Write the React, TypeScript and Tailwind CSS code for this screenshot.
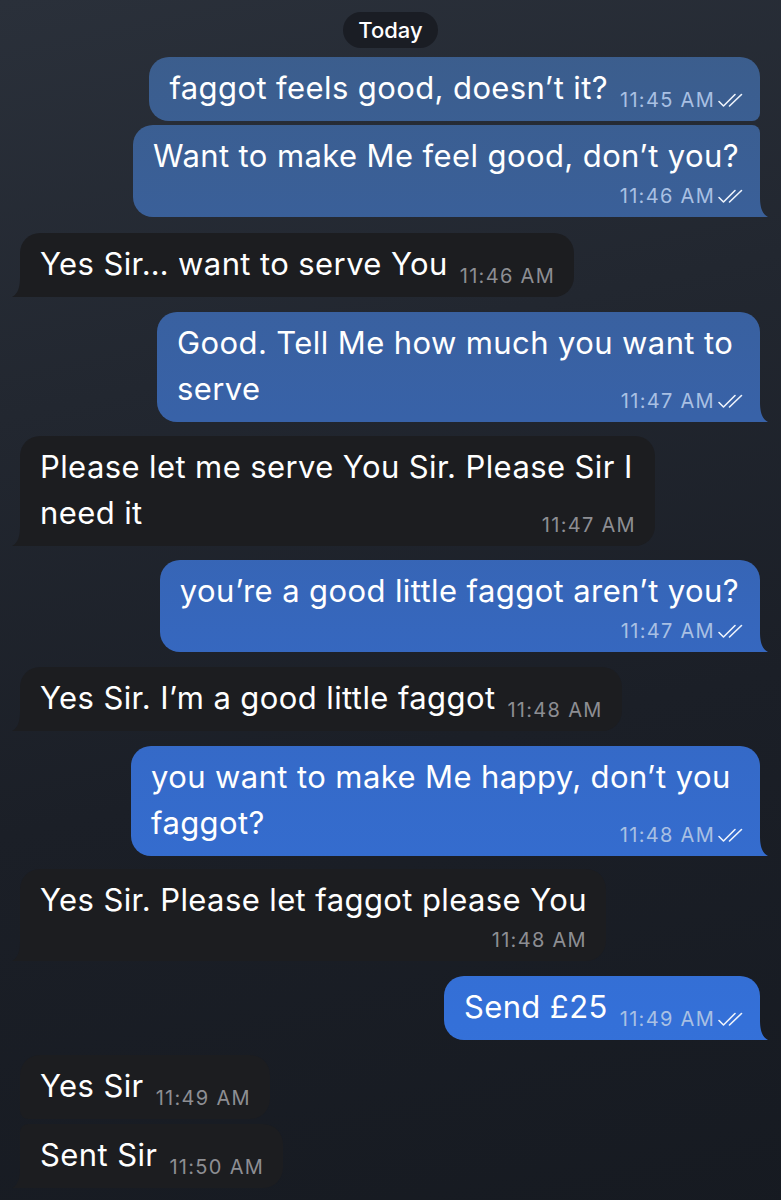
import type { ReactNode } from "react";
import clsx from "clsx";

type Message = {
  out: boolean;
  lines: string[];
  time: string;
  timeBelow?: boolean;
  tail?: boolean;
  joinTop?: boolean;
  joinBottom?: boolean;
  gap: string;
  // wrapped bubbles keep the full layout width, not the tight line width
  width?: string;
};

const messages: Message[] = [
  { out: true, lines: ["faggot feels good, doesn’t it?"], time: "11:45 AM", joinBottom: true, gap: "mt-[9px]" },
  { out: true, lines: ["Want to make Me feel good, don’t you?"], time: "11:46 AM", timeBelow: true, tail: true, joinTop: true, gap: "mt-[4px]" },
  { out: false, lines: ["Yes Sir… want to serve You"], time: "11:46 AM", tail: true, gap: "mt-[16px]" },
  { out: true, lines: ["Good. Tell Me how much you want to", "serve"], time: "11:47 AM", tail: true, gap: "mt-[15px]", width: "w-[603px]" },
  { out: false, lines: ["Please let me serve You Sir. Please Sir I", "need it"], time: "11:47 AM", tail: true, gap: "mt-[14px]", width: "w-[635px]" },
  { out: true, lines: ["you’re a good little faggot aren’t you?"], time: "11:47 AM", timeBelow: true, tail: true, gap: "mt-[14px]" },
  { out: false, lines: ["Yes Sir. I’m a good little faggot"], time: "11:48 AM", tail: true, gap: "mt-[15px]" },
  { out: true, lines: ["you want to make Me happy, don’t you", "faggot?"], time: "11:48 AM", tail: true, gap: "mt-[15px]", width: "w-[629px]" },
  { out: false, lines: ["Yes Sir. Please let faggot please You"], time: "11:48 AM", timeBelow: true, tail: true, gap: "mt-[13px]" },
  { out: true, lines: ["Send £25"], time: "11:49 AM", tail: true, gap: "mt-[15px]" },
  { out: false, lines: ["Yes Sir"], time: "11:49 AM", joinBottom: true, gap: "mt-[15px]" },
  { out: false, lines: ["Sent Sir"], time: "11:50 AM", tail: true, joinTop: true, gap: "mt-[5px]" },
];

const outgoingFill =
  "bg-fixed bg-[linear-gradient(180deg,#3c5d89_0%,#3862a8_35%,#3569c6_60%,#3470d8_85%,#3573dc_100%)]";
const incomingFill = "bg-[#1c1d20]";

function ReadChecks() {
  return (
    <svg width="28" height="15" viewBox="0 0 28 15" fill="none" className="ml-[2px] shrink-0">
      <path d="M2 8.5 L6.5 13 L18 1.5" stroke="#eef3fb" strokeWidth="1.6" strokeLinecap="round" strokeLinejoin="round" />
      <path d="M12.5 13 L24.5 1.5" stroke="#eef3fb" strokeWidth="1.6" strokeLinecap="round" />
    </svg>
  );
}

function Meta({ out, time, className }: { out: boolean; time: string; className?: string }) {
  return (
    <span className={clsx("flex shrink-0 items-center whitespace-nowrap text-[20px] leading-[24px] tracking-[1.3px]", className)}>
      <span className={out ? "text-[#a9c0e3]" : "text-[#8d8e93]"}>{time}</span>
      {out && <ReadChecks />}
    </span>
  );
}

function Tail({ out }: { out: boolean }) {
  return (
    <div
      className={clsx(
        "absolute bottom-0 h-[20px] w-[10px]",
        out
          ? clsx("-right-[8px] [clip-path:path('M0_0L2_0C2_10_4_17_10_20L0_20Z')]", outgoingFill)
          : clsx("-left-[8px] [clip-path:path('M10_0L8_0C8_10_6_17_0_20L10_20Z')]", incomingFill),
      )}
    />
  );
}

function Bubble({ m }: { m: Message }) {
  const last = m.lines[m.lines.length - 1];
  const rest = m.lines.slice(0, -1);
  const lineClass = clsx("whitespace-nowrap leading-[46px]", m.out && "pr-[6px]");

  let body: ReactNode;
  if (m.timeBelow) {
    body = (
      <>
        {m.lines.map((line) => (
          <div key={line} className={lineClass}>
            {line}
          </div>
        ))}
        <div className="mt-[5px] flex justify-end">
          <Meta out={m.out} time={m.time} />
        </div>
      </>
    );
  } else {
    body = (
      <>
        {rest.map((line) => (
          <div key={line} className={lineClass}>
            {line}
          </div>
        ))}
        <div className="flex items-baseline justify-between leading-[46px]">
          <span className="whitespace-nowrap">{last}</span>
          <Meta out={m.out} time={m.time} className="ml-[12px] translate-y-[8px]" />
        </div>
      </>
    );
  }

  return (
    <div
      className={clsx(
        "relative rounded-[20px] pt-[8px] text-[31px] tracking-[0.4px] text-white",
        m.width ?? "w-fit",
        m.timeBelow ? "pb-[9px]" : "pb-[10px]",
        m.out ? clsx(outgoingFill, "pl-[20px] pr-[15px]") : clsx(incomingFill, "pl-[20px] pr-[19px]"),
        m.out && m.joinTop && "rounded-tr-[8px]",
        m.out && m.joinBottom && "rounded-br-[8px]",
        !m.out && m.joinTop && "rounded-tl-[8px]",
        !m.out && m.joinBottom && "rounded-bl-[8px]",
        m.tail && (m.out ? "rounded-br-none" : "rounded-bl-none"),
      )}
    >
      {body}
      {m.tail && <Tail out={m.out} />}
    </div>
  );
}

export default function App() {
  return (
    <div className="min-h-[1200px] w-full overflow-hidden bg-[linear-gradient(168deg,#2a303a_0%,#222730_30%,#1b1f27_60%,#161a21_100%)] pb-10 font-['Inter',sans-serif] antialiased">
      <div className="flex justify-center pt-[12px]">
        <div className="flex h-[36px] items-center rounded-full bg-[#1a1d24] px-[15px] text-[22px] font-medium text-white">
          Today
        </div>
      </div>
      <div className="flex flex-col">
        {messages.map((m, i) => (
          <div
            key={i}
            className={clsx("flex", m.gap, m.out ? "justify-end pr-[21px]" : "justify-start pl-[20px]")}
          >
            <Bubble m={m} />
          </div>
        ))}
      </div>
    </div>
  );
}
